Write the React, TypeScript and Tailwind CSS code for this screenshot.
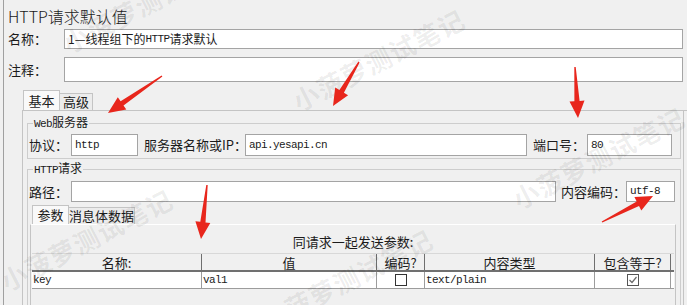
import React from "react";

type Pt = [number, number];

// red annotation arrow, tapered shaft + head
const arrowPoints = (a: Pt, b: Pt) => {
  const dx = b[0] - a[0];
  const dy = b[1] - a[1];
  const len = Math.hypot(dx, dy);
  const ux = dx / len;
  const uy = dy / len;
  const nx = -uy;
  const ny = ux;
  const head = 17;
  const bx = b[0] - ux * head;
  const by = b[1] - uy * head;
  const p = (x: number, y: number, w: number): string =>
    `${(x + nx * w).toFixed(1)},${(y + ny * w).toFixed(1)}`;
  return [
    p(a[0], a[1], 0.7),
    p(bx, by, 2.6),
    p(bx, by, 7.5),
    `${b[0]},${b[1]}`,
    p(bx, by, -7.5),
    p(bx, by, -2.6),
    p(a[0], a[1], -0.7),
  ].join(" ");
};

const arrows: [Pt, Pt][] = [
  [[162, 76], [108, 113]],
  [[359, 62], [333, 106]],
  [[575, 67], [578, 118]],
  [[207, 185], [201, 239]],
  [[602, 222], [653, 196]],
];

const marks: [number, number][] = [
  [70, 56],
  [300, 114],
  [520, 212],
  [8, 294],
  [268, 334],
];

const Label = ({ w, children }: { w: string; children: React.ReactNode }) => (
  <div className={`${w} shrink-0 text-[13px] leading-[20px] whitespace-nowrap`}>{children}</div>
);

const Field = ({ w, h, children }: { w: string; h: string; children?: React.ReactNode }) => (
  <div
    className={`${w} ${h} shrink-0 bg-white border border-[#a4a4a4] flex items-center px-[3px] whitespace-nowrap overflow-hidden`}
  >
    {children}
  </div>
);

const Mono = ({ children }: { children: React.ReactNode }) => (
  <span className="font-['Liberation_Mono',monospace] text-[11px] tracking-[-0.6px]">{children}</span>
);

const cols = [
  { w: "w-[170px]", t: "名称:", v: "key" },
  { w: "w-[175px]", t: "值", v: "val1" },
  { w: "w-[48px]", t: "编码?", v: "" },
  { w: "w-[170px]", t: "内容类型", v: "text/plain" },
  { w: "w-[76px]", t: "包含等于?", v: "" },
];

export default function App() {
  return (
    <div className="relative w-[687px] h-[305px] overflow-hidden bg-[#f0f0f0] text-[#1b1b1b] font-['Noto_Sans_CJK_SC',sans-serif]">
      <div className="ml-[3px] h-full border-l border-[#a0a0a0] pl-[4px]">
        <div className="pt-[6px] text-[16px] leading-[20px] font-light">HTTP请求默认值</div>

        <div className="mt-[3px] flex items-center pr-[4px]">
          <Label w="w-[56px]">名称：</Label>
          <Field w="flex-1" h="h-[20px]">
            <span className="text-[12px]">1—线程组下的</span>
            <Mono>HTTP</Mono>
            <span className="text-[12px]">请求默认</span>
          </Field>
        </div>
        <div className="mt-[8px] flex items-center pr-[4px]">
          <Label w="w-[56px]">注释：</Label>
          <Field w="flex-1" h="h-[25px]" />
        </div>

        <div className="mt-[8px] ml-[15px] flex items-end">
          <div className="w-[37px] h-[20px] bg-[#f9f9f9] border-t border-l border-r border-[#c4c4c4] text-[13px] leading-[19px] text-center">
            基本
          </div>
          <div className="w-[33px] h-[17px] bg-[#ececec] border-t border-r border-[#c4c4c4] text-[13px] leading-[16px] text-center">
            高级
          </div>
        </div>

        <div className="ml-[14px] h-full border-l border-t border-[#c4c4c4] pl-[4px] pr-[6px]">
          <fieldset className="mt-[4px] border border-[#cdcdcd] pb-[2px] pl-[1px]">
            <legend className="ml-[4px] px-[1px] text-[12px] leading-[13px]">
              <Mono>Web</Mono>服务器
            </legend>
            <div className="pt-[3px] flex items-center">
              <Label w="w-[42px]">协议：</Label>
              <Field w="w-[67px]" h="h-[22px]">
                <Mono>http</Mono>
              </Field>
              <div className="ml-[6px]">
                <Label w="w-[101px]">服务器名称或IP：</Label>
              </div>
              <Field w="w-[282px]" h="h-[22px]">
                <Mono>api.yesapi.cn</Mono>
              </Field>
              <div className="ml-[6px]">
                <Label w="w-[54px]">端口号：</Label>
              </div>
              <Field w="w-[85px]" h="h-[22px]">
                <Mono>80</Mono>
              </Field>
            </div>
          </fieldset>

          <fieldset className="mt-[2px] h-[200px] border border-[#cdcdcd] pl-[1px] pr-[1px]">
            <legend className="ml-[4px] px-[1px] text-[12px] leading-[13px]">
              <Mono>HTTP</Mono>请求
            </legend>
            <div className="pt-[4px] flex items-center">
              <Label w="w-[42px]">路径：</Label>
              <Field w="w-[485px]" h="h-[21px]" />
              <div className="ml-[5px]">
                <Label w="w-[65px]">内容编码：</Label>
              </div>
              <Field w="w-[49px]" h="h-[21px]">
                <Mono>utf-8</Mono>
              </Field>
            </div>

            <div className="mt-[3px] ml-[3px] flex items-end">
              <div className="w-[37px] h-[19px] bg-[#f9f9f9] border-t border-l border-r border-[#c4c4c4] text-[13px] leading-[18px] text-center">
                参数
              </div>
              <div className="w-[66px] h-[17px] bg-[#ececec] border-t border-r border-[#c4c4c4] text-[13px] leading-[16px] text-center">
                消息体数据
              </div>
            </div>

            <div className="ml-[1px] mr-[3px] h-[120px] border-l border-t border-r border-l-[#c4c4c4] border-r-[#c4c4c4] border-t-white">
              <div className="pt-[9px] text-[13px] leading-[15px] text-center">同请求一起发送参数:</div>
              <div className="mt-[4px] mx-[1px]">
                <div className="flex h-[19px] border-t border-[#d8d8d8] border-b-2 border-b-[#707070]">
                  {cols.map((c) => (
                    <div
                      key={c.t}
                      className={`${c.w} shrink-0 border-r border-[#6f6f6f] text-[13px] leading-[17px] text-center`}
                    >
                      {c.t}
                    </div>
                  ))}
                </div>
                <div className="flex h-[17px] bg-white border-b border-[#9c9c9c]">
                  {cols.map((c, i) => (
                    <div
                      key={c.t}
                      className={`${c.w} shrink-0 border-r border-[#9c9c9c] flex items-center ${
                        i === 2 || i === 4 ? "justify-center" : "pl-[1px]"
                      }`}
                    >
                      {i === 2 && <div className="w-[12px] h-[12px] border border-[#333] bg-white" />}
                      {i === 4 && (
                        <div className="w-[12px] h-[12px] border border-[#555] bg-white flex items-center justify-center">
                          <svg width="10" height="10" viewBox="0 0 10 10">
                            <path d="M1.5 5 L4 7.5 L8.5 2" fill="none" stroke="#6a6a6a" strokeWidth="1.2" />
                          </svg>
                        </div>
                      )}
                      {c.v && <Mono>{c.v}</Mono>}
                    </div>
                  ))}
                </div>
              </div>
            </div>
          </fieldset>
        </div>
      </div>

      {/* right-hand scroll pane edge */}
      <div className="absolute top-[110px] right-[3px] w-px h-[200px] bg-[#c4c4c4]" />

      {/* watermark */}
      {marks.map(([x, y], i) => (
        <div
          key={i}
          className="absolute origin-bottom-left -rotate-[27deg] text-[26px] leading-[26px] font-bold tracking-[1px] text-[#000]/[0.07] whitespace-nowrap pointer-events-none"
          style={{ left: x, top: y - 26 }}
        >
          小菠萝测试笔记
        </div>
      ))}

      {/* annotation arrows */}
      <svg className="absolute inset-0 pointer-events-none" width="687" height="305">
        {arrows.map(([a, b], i) => (
          <polygon key={i} points={arrowPoints(a, b)} fill="#e8261c" />
        ))}
      </svg>
    </div>
  );
}
